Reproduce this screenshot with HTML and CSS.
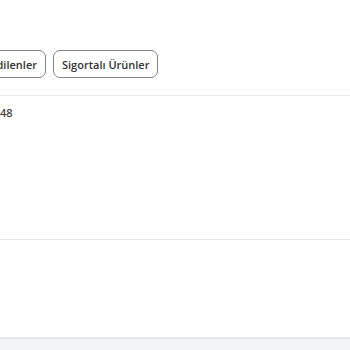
FILE: index.html
```html
<!DOCTYPE html>
<html lang="tr">
<head>
    <meta charset="UTF-8">
    <meta name="viewport" content="width=device-width, initial-scale=1.0">
    <title>Ürünler</title>
    <link rel="stylesheet" href="styles.css">
</head>
<body>
    <div class="page">
        <nav class="tabs">
            <!-- strip is scrolled, first tab only partly visible -->
            <div class="tabs-start">
                <button class="tab">Takip Edilenler</button>
            </div>
            <button class="tab">Sigortalı Ürünler</button>
        </nav>

        <section class="summary">
            <p class="count">48</p>
        </section>

        <section class="list"></section>

        <footer class="bottom"></footer>
    </div>
</body>
</html>
```

FILE: styles.css
```css
/* Global Styles */
* {
    margin: 0;
    padding: 0;
    box-sizing: border-box;
    font-family: "Open Sans", Arial, sans-serif;
}

body {
    background-color: #fff;
    color: #333;
    overflow: hidden;
}

.page {
    display: flex;
    flex-direction: column;
    height: 350px;
}

.tabs {
    display: flex;
    gap: 7px;
    padding: 50px 0 17px;
    border-bottom: 1px solid #ececec;
}

.tabs-start {
    width: 46px;
    display: flex;
    justify-content: flex-end;
}

.tab {
    flex-shrink: 0;
    height: 28px;
    padding: 0 8px;
    background: #fff;
    border: 1px solid #858585;
    border-radius: 7px;
    font-size: 11px;
    font-weight: 600;
    color: #333;
    white-space: nowrap;
    font-family: "Open Sans", Arial, sans-serif;
}

.summary {
    height: 144px;
    padding-top: 9px;
    border-bottom: 1px solid #e8e8e8;
}

.count {
    font-size: 11px;
    font-weight: 600;
    color: #444;
}

.list {
    flex: 1;
}

.bottom {
    height: 13px;
    background-color: #f3f4f6;
    border-top: 2px solid #e6e7ea;
}
```
